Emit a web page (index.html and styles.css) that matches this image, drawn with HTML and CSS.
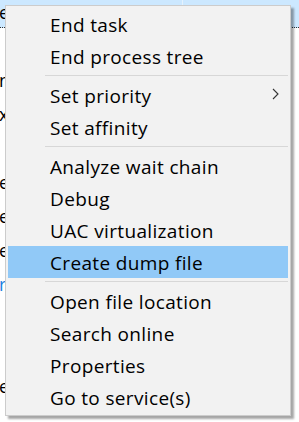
FILE: index.html
```html
<!DOCTYPE html>
<html>
<head>
<meta charset="utf-8">
<link rel="stylesheet" href="styles.css">
</head>
<body>
<div class="list">
  <div class="row selected"><span class="cell">ession</span><span class="divider"></span></div>
  <div class="row"></div>
  <div class="row"><span class="cell">n</span></div>
  <div class="row"><span class="cell">x</span></div>
  <div class="row"></div>
  <div class="row"><span class="cell">e</span></div>
  <div class="row"><span class="cell">e</span></div>
  <div class="row"><span class="cell">e</span></div>
  <div class="row"><span class="cell link">r</span></div>
  <div class="row"></div>
  <div class="row"></div>
  <div class="row"><span class="cell">e</span></div>
</div>

<div class="menu">
  <div class="item">End task</div>
  <div class="item">End process tree</div>
  <div class="sep"></div>
  <div class="item has-sub">Set priority
    <svg class="chev" width="7" height="12" viewBox="0 0 7 12"><path d="M1 1 L6 6 L1 11" fill="none" stroke="#333" stroke-width="1.1"/></svg>
  </div>
  <div class="item">Set affinity</div>
  <div class="sep"></div>
  <div class="item">Analyze wait chain</div>
  <div class="item">Debug</div>
  <div class="item">UAC virtualization</div>
  <div class="item hot">Create dump file</div>
  <div class="sep"></div>
  <div class="item">Open file location</div>
  <div class="item">Search online</div>
  <div class="item">Properties</div>
  <div class="item">Go to service(s)</div>
</div>
</body>
</html>
```

FILE: styles.css
```css
html, body {
  margin: 0;
  padding: 0;
  background: #ffffff;
  overflow: hidden;
}
body {
  width: 299px;
  height: 422px;
  position: relative;
  font-family: "Open Sans", "Noto Sans", sans-serif;
  font-size: 18px;
  color: #000;
}
.list {
  margin-top: -6px;
  display: flex;
  flex-direction: column;
}
.row {
  height: 34px;
  line-height: 34px;
  position: relative;
  white-space: nowrap;
  padding-top: 1px;
  box-sizing: border-box;
}
.row.selected {
  background: #cce8ff;
  border-bottom: 1px dotted #333;
}
.cell {
  display: inline-block;
  margin-left: -1px;
}
.link { color: #1a7fe0; }
.divider {
  position: absolute;
  left: 182px;
  top: 0;
  bottom: 0;
  width: 1px;
  background: #e5f2fd;
}
.menu {
  position: absolute;
  left: 5px;
  top: 5px;
  width: 286px;
  box-sizing: border-box;
  background: #f2f2f2;
  border: 1px solid #cccccc;
  padding: 2px;
  box-shadow: 3px 3px 2px rgba(0,0,0,0.35);
  display: flex;
  flex-direction: column;
  font-size: 19px;
  letter-spacing: 0.35px;
}
.item {
  height: 32px;
  line-height: 30px;
  padding-top: 2px;
  padding-left: 42px;
  box-sizing: border-box;
  white-space: nowrap;
  position: relative;
}
.item.hot { background: #91c9f7; }
.chev {
  position: absolute;
  right: 9px;
  top: 9px;
}
.sep {
  height: 7px;
  margin-left: 37px;
  display: flex;
  align-items: center;
}
.sep::before {
  content: "";
  display: block;
  width: 100%;
  height: 1px;
  background: #d7d7d7;
}
```
